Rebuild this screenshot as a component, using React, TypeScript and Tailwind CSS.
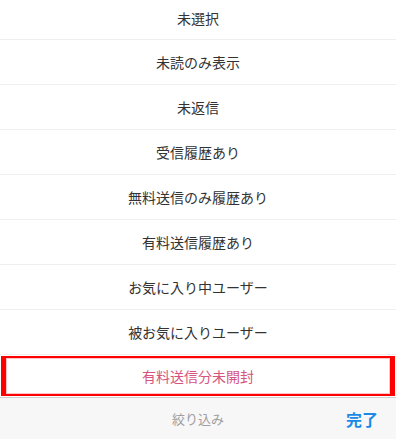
import React from 'react';

const options = [
  '未読のみ表示',
  '未返信',
  '受信履歴あり',
  '無料送信のみ履歴あり',
  '有料送信履歴あり',
  'お気に入り中ユーザー',
  '被お気に入りユーザー',
];

const font = { fontFamily: '"Noto Sans CJK JP", "Noto Sans", sans-serif' };

const App: React.FC = () => {
  return (
    <div className="w-[396px] h-[439px] bg-white flex flex-col overflow-hidden" style={font}>
      <div className="h-[40px] flex items-center justify-center pb-[3px] border-b border-[#efefef] text-[14px] text-[#333]">
        未選択
      </div>
      {options.map((label) => (
        <div
          key={label}
          className="h-[45px] flex items-center justify-center border-b border-[#efefef] text-[14px] text-[#333]"
        >
          {label}
        </div>
      ))}
      <div className="h-[42px] px-px py-px">
        <div className="h-full flex items-center justify-center border-y-2 border-x-[5px] border-[#ff0000] shadow-[inset_0_0_0_1px_#ffc4c4] text-[14px] text-[#d6557f]">
          有料送信分未開封
        </div>
      </div>
      <div className="relative flex-1 flex items-center justify-center border-t border-[#cfcfcf] bg-[#f7f7f7]">
        <span className="text-[13px] text-[#a0a0a0]">絞り込み</span>
        <span className="absolute right-[18px] text-[16px] font-bold text-[#1a8ae6]">完了</span>
      </div>
    </div>
  );
};

export default App;
